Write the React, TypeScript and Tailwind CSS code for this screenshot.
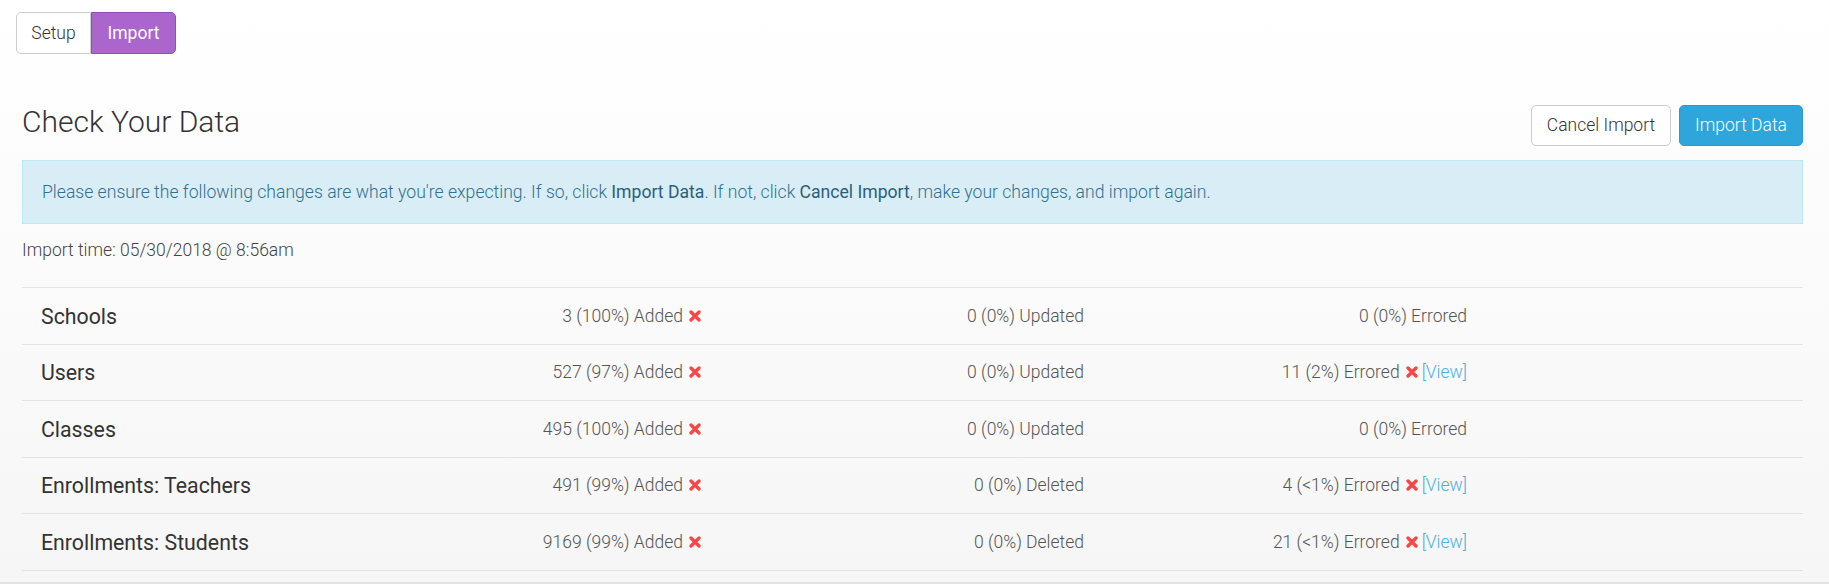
import React from "react";

type Cell = { text: string; error?: boolean; view?: boolean };

const rows: { name: string; cells: Cell[] }[] = [
  {
    name: "Schools",
    cells: [{ text: "3 (100%) Added", error: true }, { text: "0 (0%) Updated" }, { text: "0 (0%) Errored" }],
  },
  {
    name: "Users",
    cells: [
      { text: "527 (97%) Added", error: true },
      { text: "0 (0%) Updated" },
      { text: "11 (2%) Errored", error: true, view: true },
    ],
  },
  {
    name: "Classes",
    cells: [{ text: "495 (100%) Added", error: true }, { text: "0 (0%) Updated" }, { text: "0 (0%) Errored" }],
  },
  {
    name: "Enrollments: Teachers",
    cells: [
      { text: "491 (99%) Added", error: true },
      { text: "0 (0%) Deleted" },
      { text: "4 (<1%) Errored", error: true, view: true },
    ],
  },
  {
    name: "Enrollments: Students",
    cells: [
      { text: "9169 (99%) Added", error: true },
      { text: "0 (0%) Deleted" },
      { text: "21 (<1%) Errored", error: true, view: true },
    ],
  },
];

function RemoveIcon() {
  return (
    <svg viewBox="0 0 12 12" className="ml-[6px] h-[12px] w-[12px] shrink-0">
      <path d="M2 2 L10 10 M10 2 L2 10" stroke="#f94545" strokeWidth="3.3" strokeLinecap="round" fill="none" />
    </svg>
  );
}

export default function App() {
  return (
    <div className="flex h-[584px] flex-col bg-gradient-to-b from-white to-[#f6f6f6] font-['Roboto',sans-serif]">
      {/* step switcher */}
      <div className="flex pl-[16px] pt-[12px]">
        <button className="h-[42px] w-[75px] rounded-l-[5px] border border-[#cccccc] bg-white text-[17.5px] font-light text-[#333]">
          Setup
        </button>
        <button className="h-[42px] w-[85px] rounded-r-[5px] border border-[#8f4fb3] bg-[#aa66cc] text-[17.5px] text-white">
          Import
        </button>
      </div>

      <div className="ml-[22px] mr-[26px]">
        <div className="mt-[51px] flex items-start justify-between">
          <h1 className="text-[30px] font-light leading-[33px] text-[#333]">Check Your Data</h1>
          <div className="flex gap-[8px]">
            <button className="h-[41px] w-[140px] rounded-[5px] border border-[#cccccc] bg-white text-[17.5px] font-light text-[#333]">
              Cancel Import
            </button>
            <button className="h-[41px] w-[124px] rounded-[5px] border border-[#2a9bd0] bg-[#2ea6dc] text-[17.5px] font-light text-white">
              Import Data
            </button>
          </div>
        </div>

        <div className="mt-[14px] flex h-[64px] items-center border border-[#bce8f1] bg-[#d9edf7] px-[19px] text-[17.6px] font-light text-[#31708f]">
          <p>
            Please ensure the following changes are what you're expecting. If so, click{" "}
            <span className="font-normal text-[#2a5f7c]">Import Data</span>. If not, click{" "}
            <span className="font-normal text-[#2a5f7c]">Cancel Import</span>, make your changes, and import again.
          </p>
        </div>

        <p className="mt-[13.5px] text-[17.5px] font-light leading-[25px] text-[#444]">Import time: 05/30/2018 @ 8:56am</p>

        <div className="mt-[24.5px] border-b border-[#e3e3e3]">
          {rows.map((row) => (
            <div
              key={row.name}
              className="grid h-[56.5px] grid-cols-[296px_383px_383px_383px_1fr] items-center border-t border-[#e3e3e3]"
            >
              <div className="pl-[19px] pt-[2px] text-[21.3px] text-[#333]">{row.name}</div>
              {row.cells.map((cell, i) => (
                <div key={i} className="flex items-center justify-end text-[17.5px] font-light text-[#555]">
                  <span>{cell.text}</span>
                  {cell.error && <RemoveIcon />}
                  {cell.view && <span className="ml-[4px] text-[#4cb0e0]">[View]</span>}
                </div>
              ))}
              <div />
            </div>
          ))}
        </div>
      </div>

      <div className="mt-auto h-[2px] bg-[#e3e3e3]" />
    </div>
  );
}
